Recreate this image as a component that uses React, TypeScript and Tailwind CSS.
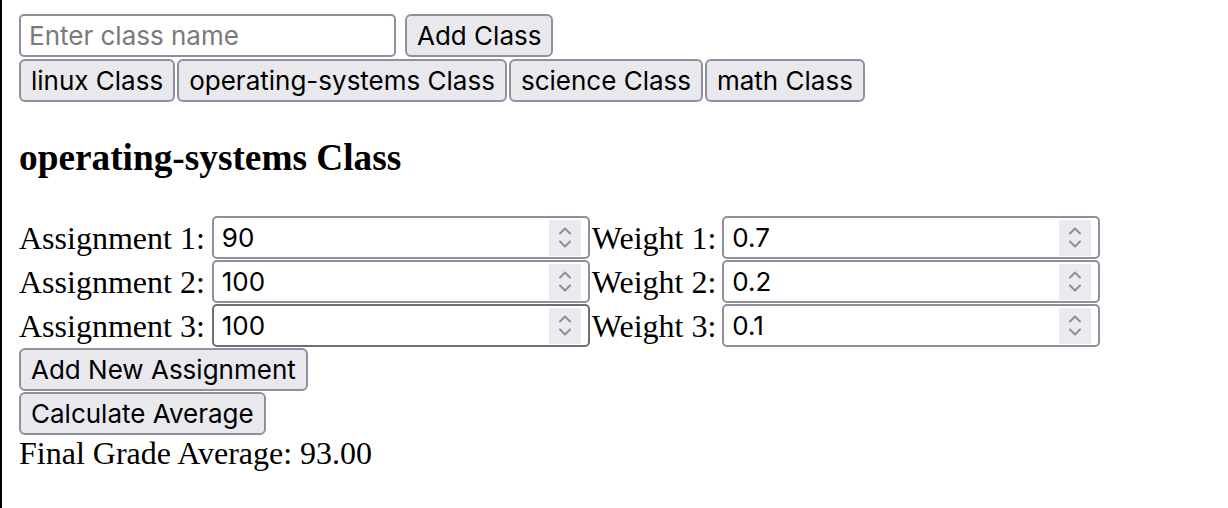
import React from "react";

const sans = "font-['Inter','Liberation_Sans',sans-serif]";

function Btn({ children, className = "" }: { children: React.ReactNode; className?: string }) {
  return (
    <button
      className={`flex h-[43px] items-center rounded-[6px] border-2 border-[#8f8f9d] bg-[#e9e9ed] px-[10px] text-[26px] leading-none text-black ${sans} ${className}`}
    >
      {children}
    </button>
  );
}

function Spinner() {
  return (
    <div className="mr-[7px] flex h-[36px] w-[32px] flex-col items-center justify-center gap-[5px] bg-[#ebebef]">
      <svg width="14" height="9" viewBox="0 0 14 9" fill="none">
        <path d="M2 7.5 L7 2.5 L12 7.5" stroke="#8e8e96" strokeWidth="2" strokeLinecap="round" strokeLinejoin="round" />
      </svg>
      <svg width="14" height="9" viewBox="0 0 14 9" fill="none">
        <path d="M2 1.5 L7 6.5 L12 1.5" stroke="#8e8e96" strokeWidth="2" strokeLinecap="round" strokeLinejoin="round" />
      </svg>
    </div>
  );
}

function NumField({ value, dark = false }: { value: string; dark?: boolean }) {
  return (
    <div
      className={`flex h-[43px] w-[378px] items-center rounded-[5px] border-2 bg-white ${
        dark ? "border-[#6e6e78]" : "border-[#8f8f9d]"
      }`}
    >
      <input
        readOnly
        value={value}
        className={`h-full min-w-0 flex-1 bg-transparent pl-[8px] text-[26px] text-black outline-none ${sans}`}
      />
      <Spinner />
    </div>
  );
}

export default function App() {
  const rows = [
    { a: "90", w: "0.7" },
    { a: "100", w: "0.2" },
    { a: "100", w: "0.1" },
  ];
  return (
    <div className="min-h-[508px] border-l-2 border-black bg-white pl-[17px] pt-[14px] font-['Liberation_Serif',serif] text-[32px] text-black">
      <div className="flex items-center gap-[9px]">
        <input
          placeholder="Enter class name"
          className={`h-[43px] w-[377px] rounded-[5px] border-2 border-[#8f8f9d] bg-white pl-[8px] text-[26px] text-black outline-none placeholder:text-[#7a7a7a] ${sans}`}
        />
        <Btn>Add Class</Btn>
      </div>
      <div className="mt-[2px] flex gap-[2px]">
        <Btn className="h-[42px]">linux Class</Btn>
        <Btn className="h-[42px]">operating-systems Class</Btn>
        <Btn className="h-[42px]">science Class</Btn>
        <Btn className="h-[42px]">math Class</Btn>
      </div>
      <h3 className="mb-[37px] mt-[34px] text-[37.3px] font-bold leading-[43px]">operating-systems Class</h3>
      <div className="flex flex-col gap-[1px]">
        {rows.map((r, i) => (
          <div key={i} className="flex h-[43px] items-center">
            <span className="mr-[7px] whitespace-nowrap">Assignment {i + 1}:</span>
            <NumField value={r.a} dark={i === 2} />
            <span className="ml-[2px] mr-[6px] whitespace-nowrap">Weight {i + 1}:</span>
            <NumField value={r.w} />
          </div>
        ))}
      </div>
      <div className="mt-[1px] flex flex-col items-start gap-[1px]">
        <Btn>Add New Assignment</Btn>
        <Btn>Calculate Average</Btn>
      </div>
      <div className="leading-[36px]">Final Grade Average: 93.00</div>
    </div>
  );
}
